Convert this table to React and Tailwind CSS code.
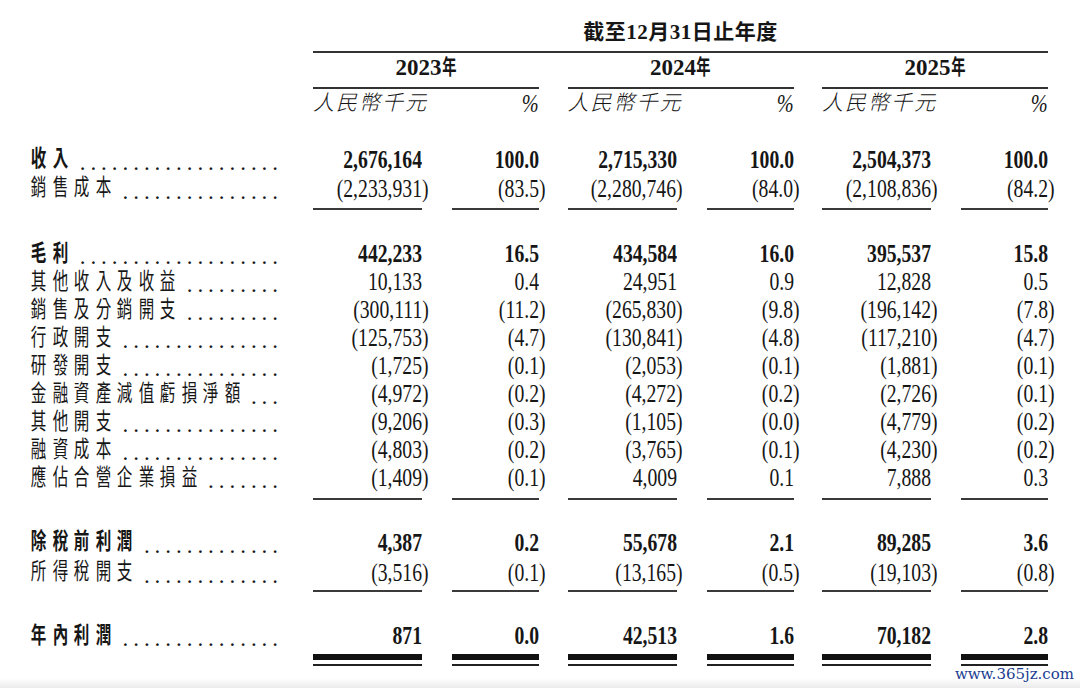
const sections = [
  {
    top: "mt-[26.5px]",
    rowH: "h-[29px]",
    rule: "mt-[5px]",
    rows: [
      { label: "收入", bold: true, v: ["2,676,164", "100.0", "2,715,330", "100.0", "2,504,373", "100.0"] },
      { label: "銷售成本", v: ["(2,233,931)", "(83.5)", "(2,280,746)", "(84.0)", "(2,108,836)", "(84.2)"] },
    ],
  },
  {
    top: "mt-[30.5px]",
    rowH: "h-[28px]",
    rule: "mt-[6px]",
    rows: [
      { label: "毛利", bold: true, v: ["442,233", "16.5", "434,584", "16.0", "395,537", "15.8"] },
      { label: "其他收入及收益", v: ["10,133", "0.4", "24,951", "0.9", "12,828", "0.5"] },
      { label: "銷售及分銷開支", v: ["(300,111)", "(11.2)", "(265,830)", "(9.8)", "(196,142)", "(7.8)"] },
      { label: "行政開支", v: ["(125,753)", "(4.7)", "(130,841)", "(4.8)", "(117,210)", "(4.7)"] },
      { label: "研發開支", v: ["(1,725)", "(0.1)", "(2,053)", "(0.1)", "(1,881)", "(0.1)"] },
      { label: "金融資產減值虧損淨額", v: ["(4,972)", "(0.2)", "(4,272)", "(0.2)", "(2,726)", "(0.1)"] },
      { label: "其他開支", v: ["(9,206)", "(0.3)", "(1,105)", "(0.0)", "(4,779)", "(0.2)"] },
      { label: "融資成本", v: ["(4,803)", "(0.2)", "(3,765)", "(0.1)", "(4,230)", "(0.2)"] },
      { label: "應佔合營企業損益", v: ["(1,409)", "(0.1)", "4,009", "0.1", "7,888", "0.3"] },
    ],
  },
  {
    top: "mt-[28px]",
    rowH: "h-[30px]",
    rule: "mt-[2.5px]",
    rows: [
      { label: "除稅前利潤", bold: true, v: ["4,387", "0.2", "55,678", "2.1", "89,285", "3.6"] },
      { label: "所得稅開支", v: ["(3,516)", "(0.1)", "(13,165)", "(0.5)", "(19,103)", "(0.8)"] },
    ],
  },
];

const total = { label: "年內利潤", bold: true, v: ["871", "0.0", "42,513", "1.6", "70,182", "2.8"] };
const years = ["2023", "2024", "2025"];

function Label({ text, bold }) {
  const chars = [...text];
  // dot leaders fill what is left up to the column, all ending on the same edge
  const dots = Math.max(0, Math.floor((253 - chars.length * 21.5) / 10.8));
  return (
    <div className="w-[313px] shrink-0 pl-[28px] pr-[30px] flex items-center">
      <div className={`flex shrink-0 ${bold ? "font-bold" : "font-normal"}`}>
        {chars.map((c, i) => (
          <span key={i} className="w-[21.5px] flex justify-center">
            <span className="inline-block scale-x-[0.74] scale-y-[1.07] text-[21px] leading-none">{c}</span>
          </span>
        ))}
      </div>
      <span className="ml-auto mt-[5px] whitespace-nowrap text-[23px] leading-none tracking-[4.95px] font-normal">
        {".".repeat(dots)}
      </span>
    </div>
  );
}

function Val({ v, bold, w }) {
  const neg = v.startsWith("(");
  return (
    <div className={`${w} flex items-center justify-end`}>
      <span className={`inline-block origin-right scale-x-[0.82] scale-y-[1.03] text-[24px] leading-none ${bold ? "font-bold" : "font-normal"}`}>
        {neg ? v.slice(0, -1) : v}
        {neg && <span className="-mr-[0.333em]">)</span>}
      </span>
    </div>
  );
}

function Cols({ children }) {
  return <div className="flex gap-[28.5px]">{children}</div>;
}

function Row({ r, h }) {
  return (
    <div className={`flex ${h}`}>
      <Label text={r.label} bold={r.bold} />
      <Cols>
        {years.map((y, g) => (
          <div key={y} className="flex gap-[30px]">
            <Val v={r.v[g * 2]} bold={r.bold} w="w-[109px]" />
            <Val v={r.v[g * 2 + 1]} bold={r.bold} w="w-[87px]" />
          </div>
        ))}
      </Cols>
    </div>
  );
}

function Rule({ mt }) {
  return (
    <div className={`flex ${mt}`}>
      <div className="w-[313px] shrink-0" />
      <Cols>
        {years.map((y) => (
          <div key={y} className="flex gap-[30px]">
            <div className="w-[109px] h-[1.5px] bg-[#3a3a3a]" />
            <div className="w-[87px] h-[1.5px] bg-[#3a3a3a]" />
          </div>
        ))}
      </Cols>
    </div>
  );
}

function DoubleRule() {
  return (
    <div className="flex mt-[4px]">
      <div className="w-[313px] shrink-0" />
      <Cols>
        {years.map((y) => (
          <div key={y} className="flex gap-[30px]">
            {["w-[109px]", "w-[87px]"].map((w) => (
              <div key={w} className={`${w} flex flex-col gap-[4px]`}>
                <div className="h-[6px] bg-[#111]" />
                <div className="h-[2px] bg-[#222]" />
              </div>
            ))}
          </div>
        ))}
      </Cols>
    </div>
  );
}

export default function App() {
  return (
    <div className="relative w-[1080px] h-[688px] overflow-hidden bg-linear-to-b from-white from-[98.6%] to-[#ebebeb] text-[#161616] font-['Liberation_Serif','Noto_Sans_CJK_TC',serif]">
      <div className="pt-[20px]">
        <div className="flex h-[24px]">
          <div className="w-[313px] shrink-0" />
          <div className="w-[735px] flex items-center justify-center text-[21px] leading-none font-bold tracking-[0.5px]">
            截至12月31日止年度
          </div>
        </div>
        <div className="mt-[7px] ml-[313px] w-[735px] h-[1.5px] bg-[#333]" />
        <div className="flex h-[30px]">
          <div className="w-[313px] shrink-0" />
          <Cols>
            {years.map((y) => (
              <div key={y} className="w-[226px] flex items-center justify-center font-bold leading-none">
                <span className="text-[23px]">{y}</span>
                <span className="w-[15px] flex justify-center">
                  <span className="inline-block scale-x-[0.68] text-[21px]">年</span>
                </span>
              </div>
            ))}
          </Cols>
        </div>
        <div className="flex mt-[4.5px]">
          <div className="w-[313px] shrink-0" />
          <Cols>
            {years.map((y) => (
              <div key={y} className="w-[226px] h-[1.5px] bg-[#333]" />
            ))}
          </Cols>
        </div>
        <div className="flex h-[30px]">
          <div className="w-[313px] shrink-0" />
          <Cols>
            {years.map((y) => (
              <div key={y} className="w-[226px] flex items-center justify-between leading-none italic">
                <span className="text-[21px] tracking-[2px] font-light">人民幣千元</span>
                <span className="inline-block origin-right scale-x-[0.78] text-[26px] font-light">%</span>
              </div>
            ))}
          </Cols>
        </div>
      </div>

      {sections.map((s, i) => (
        <div key={i} className={s.top}>
          {s.rows.map((r) => (
            <Row key={r.label} r={r} h={s.rowH} />
          ))}
          <Rule mt={s.rule} />
        </div>
      ))}

      <div className="mt-[30.5px]">
        <Row r={total} h="h-[28px]" />
        <DoubleRule />
      </div>

      <div className="absolute right-[6px] bottom-[6px] text-[15px] leading-none text-[#1b3d8f] font-['DejaVu_Serif',serif]">
        www.365jz.com
      </div>
    </div>
  );
}
